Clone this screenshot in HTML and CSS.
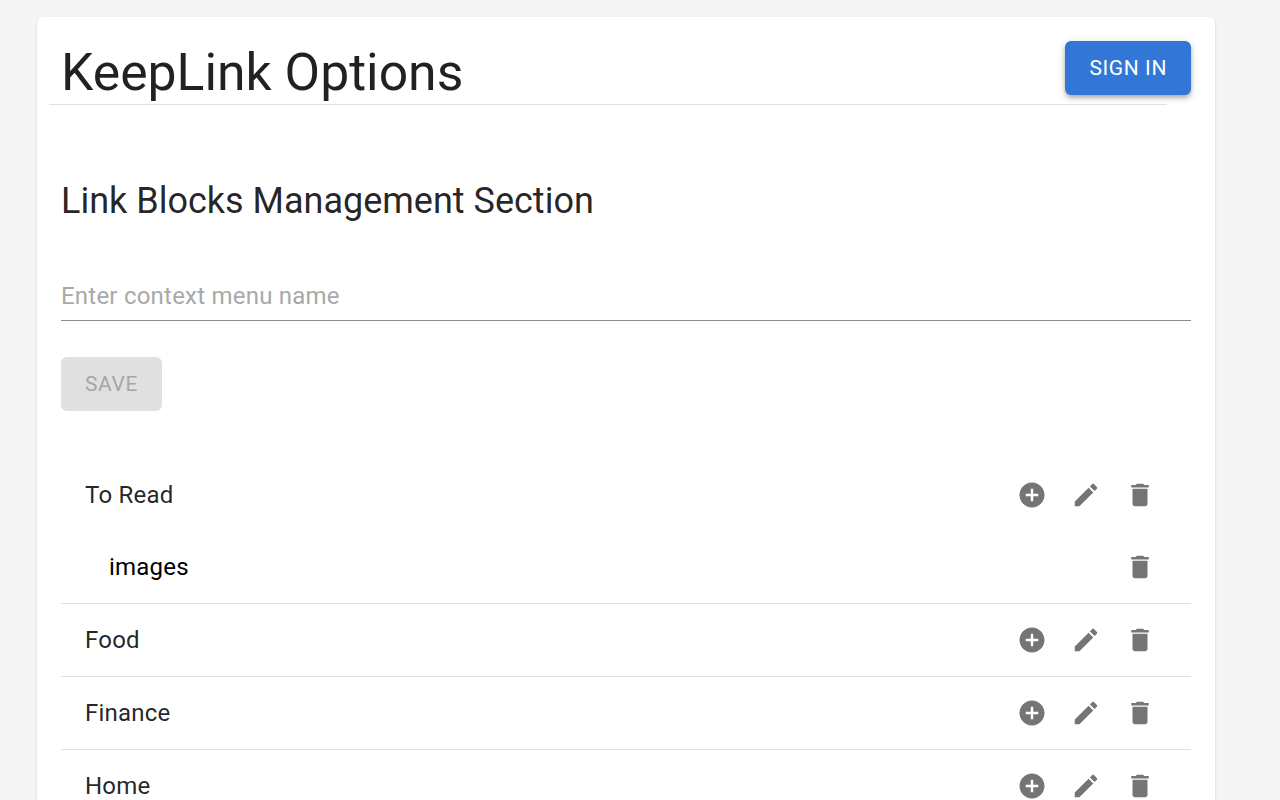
FILE: index.html
```html
<!DOCTYPE html>
<html lang="en">
<head>
<meta charset="utf-8">
<title>KeepLink Options</title>
<link rel="stylesheet" href="styles.css">
</head>
<body>
<main class="card">
  <header class="header">
    <h1 class="title">KeepLink Options</h1>
    <button class="btn btn-primary" type="button">Sign in</button>
  </header>
  <hr class="header-rule">
  <h2 class="section-title">Link Blocks Management Section</h2>
  <div class="field"><input class="field-input" type="text" placeholder="Enter context menu name"></div>
  <button class="btn btn-disabled" type="button" disabled>Save</button>
  <ul class="list">
    <li class="row row-plain">
      <span class="row-label">To Read</span>
      <span class="row-actions">
        <svg class="icon" viewBox="0 0 24 24"><path d="M12 2C6.48 2 2 6.48 2 12s4.48 10 10 10 10-4.48 10-10S17.52 2 12 2zm5 11h-4v4h-2v-4H7v-2h4V7h2v4h4v2z"/></svg>
        <svg class="icon" viewBox="0 0 24 24"><path d="M3 17.25V21h3.75L17.81 9.94l-3.75-3.75L3 17.25zM20.71 7.04c.39-.39.39-1.02 0-1.41l-2.34-2.34c-.39-.39-1.02-.39-1.41 0l-1.83 1.83 3.75 3.75 1.83-1.83z"/></svg>
        <svg class="icon" viewBox="0 0 24 24"><path d="M6 19c0 1.1.9 2 2 2h8c1.1 0 2-.9 2-2V7H6v12zM19 4h-3.5l-1-1h-5l-1 1H5v2h14V4z"/></svg>
      </span>
    </li>
    <li class="row row-child">
      <span class="row-label">images</span>
      <span class="row-actions">
        <svg class="icon" viewBox="0 0 24 24"><path d="M6 19c0 1.1.9 2 2 2h8c1.1 0 2-.9 2-2V7H6v12zM19 4h-3.5l-1-1h-5l-1 1H5v2h14V4z"/></svg>
      </span>
    </li>
    <li class="row">
      <span class="row-label">Food</span>
      <span class="row-actions">
        <svg class="icon" viewBox="0 0 24 24"><path d="M12 2C6.48 2 2 6.48 2 12s4.48 10 10 10 10-4.48 10-10S17.52 2 12 2zm5 11h-4v4h-2v-4H7v-2h4V7h2v4h4v2z"/></svg>
        <svg class="icon" viewBox="0 0 24 24"><path d="M3 17.25V21h3.75L17.81 9.94l-3.75-3.75L3 17.25zM20.71 7.04c.39-.39.39-1.02 0-1.41l-2.34-2.34c-.39-.39-1.02-.39-1.41 0l-1.83 1.83 3.75 3.75 1.83-1.83z"/></svg>
        <svg class="icon" viewBox="0 0 24 24"><path d="M6 19c0 1.1.9 2 2 2h8c1.1 0 2-.9 2-2V7H6v12zM19 4h-3.5l-1-1h-5l-1 1H5v2h14V4z"/></svg>
      </span>
    </li>
    <li class="row">
      <span class="row-label">Finance</span>
      <span class="row-actions">
        <svg class="icon" viewBox="0 0 24 24"><path d="M12 2C6.48 2 2 6.48 2 12s4.48 10 10 10 10-4.48 10-10S17.52 2 12 2zm5 11h-4v4h-2v-4H7v-2h4V7h2v4h4v2z"/></svg>
        <svg class="icon" viewBox="0 0 24 24"><path d="M3 17.25V21h3.75L17.81 9.94l-3.75-3.75L3 17.25zM20.71 7.04c.39-.39.39-1.02 0-1.41l-2.34-2.34c-.39-.39-1.02-.39-1.41 0l-1.83 1.83 3.75 3.75 1.83-1.83z"/></svg>
        <svg class="icon" viewBox="0 0 24 24"><path d="M6 19c0 1.1.9 2 2 2h8c1.1 0 2-.9 2-2V7H6v12zM19 4h-3.5l-1-1h-5l-1 1H5v2h14V4z"/></svg>
      </span>
    </li>
    <li class="row">
      <span class="row-label">Home</span>
      <span class="row-actions">
        <svg class="icon" viewBox="0 0 24 24"><path d="M12 2C6.48 2 2 6.48 2 12s4.48 10 10 10 10-4.48 10-10S17.52 2 12 2zm5 11h-4v4h-2v-4H7v-2h4V7h2v4h4v2z"/></svg>
        <svg class="icon" viewBox="0 0 24 24"><path d="M3 17.25V21h3.75L17.81 9.94l-3.75-3.75L3 17.25zM20.71 7.04c.39-.39.39-1.02 0-1.41l-2.34-2.34c-.39-.39-1.02-.39-1.41 0l-1.83 1.83 3.75 3.75 1.83-1.83z"/></svg>
        <svg class="icon" viewBox="0 0 24 24"><path d="M6 19c0 1.1.9 2 2 2h8c1.1 0 2-.9 2-2V7H6v12zM19 4h-3.5l-1-1h-5l-1 1H5v2h14V4z"/></svg>
      </span>
    </li>
  </ul>
</main>
</body>
</html>
```
FILE: styles.css
```css
html, body { margin: 0; height: 800px; overflow: hidden; }
body { background: #f5f5f5; font-family: Roboto, "Liberation Sans", sans-serif; color: rgba(0,0,0,0.87); }
.card {
  box-sizing: border-box;
  width: 1178px;
  margin: 17px 0 0 37px;
  padding: 0 24px 24px;
  background: #fff;
  border-radius: 6px;
  box-shadow: 0 2px 1px -1px rgba(0,0,0,0.2), 0 1px 1px 0 rgba(0,0,0,0.14), 0 1px 3px 0 rgba(0,0,0,0.12);
}
.header { display: flex; justify-content: space-between; align-items: flex-start; height: 87px; }
.title { margin: 28px 0 0; font-size: 51.7px; line-height: 56px; font-weight: 400; }
.header-rule { margin: 0 24px 0 -12px; height: 1px; border: 0; background: #e0e0e0; }
.btn {
  display: block;
  box-sizing: border-box;
  height: 54px;
  padding: 0 24px;
  border: 0;
  border-radius: 6px;
  font-family: inherit;
  font-size: 21px;
  font-weight: 400;
  letter-spacing: 0.6px;
  text-transform: uppercase;
}
.btn-primary {
  margin-top: 24px;
  background: #3277d6;
  color: #fff;
  box-shadow: 0 2px 4px -1px rgba(0,0,0,0.2), 0 4px 5px 0 rgba(0,0,0,0.14), 0 1px 10px 0 rgba(0,0,0,0.12);
}
.btn-disabled { background: #e0e0e0; color: #a6a6a6; }
.section-title { margin: 75px 0 0; font-size: 36px; line-height: 42px; font-weight: 400; }
.field { margin-top: 52px; border-bottom: 1px solid #8c8c8c; }
.field-input {
  display: block;
  box-sizing: border-box;
  width: 100%;
  height: 46px;
  padding: 0 0 2px;
  border: 0;
  outline: 0;
  background: transparent;
  font-family: inherit;
  font-size: 24px;
  letter-spacing: 0.225px;
  color: inherit;
}
.field-input::placeholder { color: #a9a9a9; opacity: 1; }
.field + .btn { margin-top: 36px; }
.list { margin: 48px 0 0; padding: 0; list-style: none; }
.row {
  display: flex;
  justify-content: space-between;
  align-items: center;
  box-sizing: border-box;
  height: 73px;
  padding: 0 24px;
  border-top: 1px solid #e0e0e0;
}
.row-plain { height: 72px; border-top: 0; }
.row-child { height: 72px; border-top: 0; padding-left: 48px; color: #000; }
.row-label { font-size: 24px; line-height: 32px; letter-spacing: 0.225px; }
.row-actions { display: flex; gap: 24px; margin-right: 12px; }
.icon { display: block; width: 30px; height: 30px; fill: #757575; }
```
